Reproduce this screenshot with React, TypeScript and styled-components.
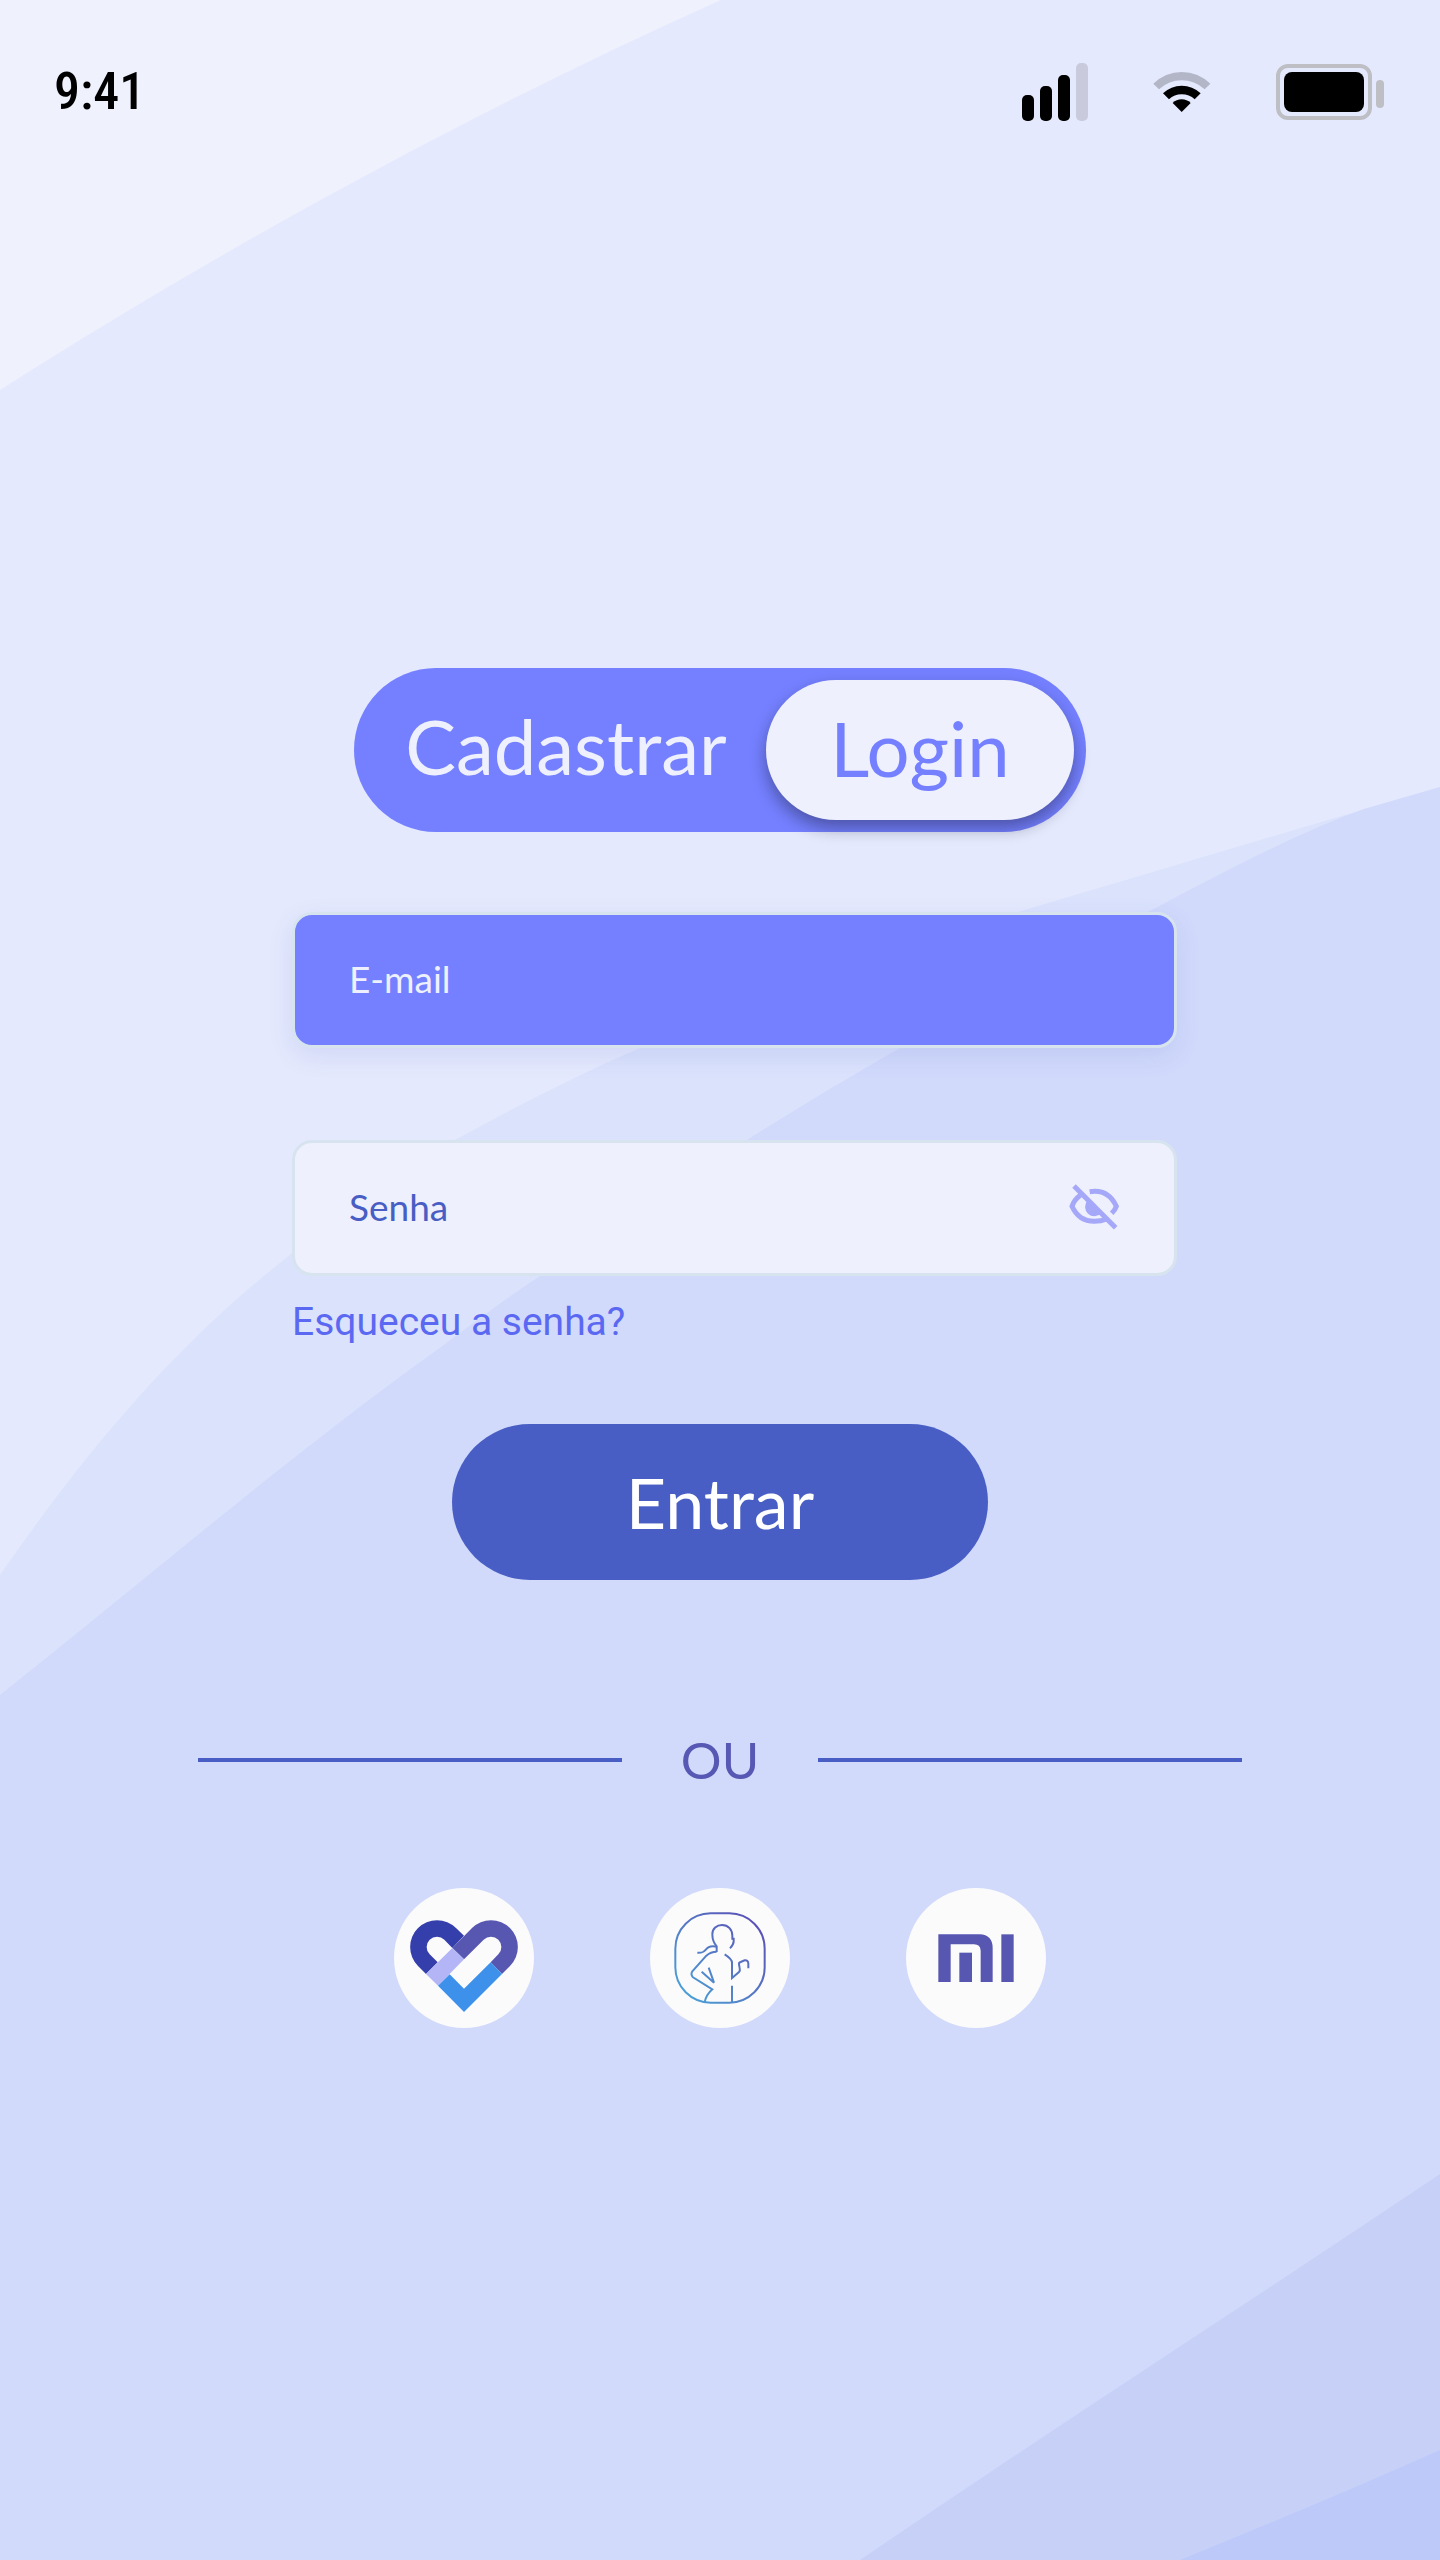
import React from "react";
import styled, { createGlobalStyle } from "styled-components";

const colors = {
  base: "#e4e9fd",
  pale: "#eef0fd",
  primary: "#7480ff",
  strong: "#485ec4",
  violet: "#5757b4",
  link: "#5b68f2",
};

const humanist = `Lato, "Open Sans", sans-serif`;

const GlobalStyle = createGlobalStyle`
  *, *::before, *::after { box-sizing: border-box; }
  body { margin: 0; background: ${colors.base}; }
  button, input { font-family: inherit; }
`;

const Screen = styled.div`
  position: relative;
  isolation: isolate;
  min-height: 100vh;
  padding-bottom: 96px;
  font-family: ${humanist};
  overflow: hidden;
`;

const Backdrop = styled.svg`
  position: absolute;
  inset: 0;
  z-index: -1;
  width: 100%;
  height: 100%;
`;

const StatusBar = styled.header`
  display: flex;
  align-items: center;
  justify-content: space-between;
  height: 184px;
  padding: 0 56px 0 54px;
`;

const Clock = styled.time`
  font-family: "Roboto Condensed", Roboto, sans-serif;
  font-size: 52px;
  font-weight: 500;
  line-height: 64px;
  color: #000;
`;

const StatusIcons = styled.div`
  display: flex;
  align-items: center;
  gap: 64px;
`;

const Content = styled.main`
  display: flex;
  flex-direction: column;
  align-items: center;
  padding: 484px 24px 0;
`;

const Toggle = styled.div`
  display: grid;
  grid-template-columns: 1fr 308px;
  width: 732px;
  max-width: 100%;
  height: 164px;
  padding: 12px;
  border-radius: 82px;
  background: ${colors.primary};
`;

const ToggleOption = styled.button<{ $active?: boolean }>`
  padding: 0 0 ${(p) => (p.$active ? "4px" : "8px")};
  border: 0;
  border-radius: 70px;
  background: ${(p) => (p.$active ? colors.pale : "transparent")};
  color: ${(p) => (p.$active ? colors.primary : colors.pale)};
  box-shadow: ${(p) => (p.$active ? "0 8px 16px rgba(20, 20, 40, 0.4)" : "none")};
  font-size: 76px;
  line-height: 92px;
`;

const Form = styled.form`
  display: flex;
  flex-direction: column;
  align-items: center;
  width: 100%;
  margin-top: 80px;
`;

const Fields = styled.div`
  display: flex;
  flex-direction: column;
  width: 914px;
  max-width: 100%;
  padding-left: 29px;
`;

const Field = styled.label<{ $filled?: boolean }>`
  display: flex;
  align-items: center;
  height: 136px;
  padding: 0 54px 2px;
  border: 3px solid #d7e4ef;
  border-radius: 20px;
  background: ${(p) => (p.$filled ? colors.primary : colors.pale)};
  color: ${(p) => (p.$filled ? colors.pale : colors.strong)};
  box-shadow: ${(p) => (p.$filled ? "0 8px 24px rgba(72, 94, 196, 0.12)" : "none")};

  & + & {
    margin-top: 92px;
  }
`;

const Input = styled.input`
  flex: 1;
  min-width: 0;
  padding: 0;
  border: 0;
  outline: 0;
  background: transparent;
  color: inherit;
  font-size: 37px;
  line-height: 48px;

  &::placeholder {
    color: inherit;
    opacity: 1;
  }
`;

const IconButton = styled.button`
  display: flex;
  padding: 0;
  border: 0;
  background: transparent;
`;

const ForgotLink = styled.a`
  align-self: flex-start;
  margin-top: 22px;
  font-family: Roboto, sans-serif;
  font-size: 39px;
  line-height: 48px;
  color: ${colors.link};
  text-decoration: none;
`;

const Submit = styled.button`
  width: 536px;
  max-width: 100%;
  height: 156px;
  margin-top: 78px;
  padding: 0;
  border: 0;
  border-radius: 78px;
  background: ${colors.strong};
  color: #fff;
  font-size: 70px;
  line-height: 84px;
`;

const Divider = styled.div`
  display: grid;
  grid-template-columns: 1fr 196px 1fr;
  align-items: center;
  width: 1044px;
  max-width: 100%;
  margin-top: 148px;
  color: ${colors.violet};
  font-size: 51px;
  line-height: 64px;
  text-align: center;

  &::before,
  &::after {
    content: "";
    height: 4px;
    background: ${colors.strong};
  }
`;

const Providers = styled.div`
  display: flex;
  gap: 116px;
  margin-top: 96px;
`;

const Provider = styled.button`
  display: flex;
  width: 140px;
  height: 140px;
  padding: 0;
  border: 0;
  border-radius: 50%;
  background: #fbfbfc;
`;

const Waves = () => (
  <Backdrop viewBox="0 0 1440 2560" preserveAspectRatio="none" aria-hidden="true">
    <path fill="#eff1fd" d="M0 0H721C470 112 220 250 0 390Z" />
    <path
      fill="#dae2fc"
      d="M0 1575C90 1445 180 1342 280 1263C335 1218 395 1174 455 1140C515 1107 577 1075 640 1048C760 996 890 950 1018 912C1160 870 1300 828 1440 787V2560H0Z"
    />
    <path
      fill="#d1dafb"
      d="M0 1695C145 1580 290 1455 437 1350C470 1325 505 1299 540 1276C608 1230 677 1183 747 1140C798 1108 849 1077 900 1048C980 1000 1065 952 1148 912C1225 871 1295 834 1364 809L1440 787V2560H0Z"
    />
    <path fill="#c7d1f8" d="M1440 2174C1250 2302 1050 2430 860 2560H1440Z" />
    <path fill="#bdc9f8" d="M1440 2450C1355 2488 1268 2524 1180 2560H1440Z" />
  </Backdrop>
);

const SignalIcon = () => (
  <svg width="66" height="58" viewBox="0 0 66 58" aria-hidden="true">
    <rect x="0" y="32" width="12" height="26" rx="5" />
    <rect x="18" y="23" width="12" height="35" rx="5" />
    <rect x="36" y="12" width="12" height="46" rx="5" />
    <rect x="54" y="0" width="12" height="58" rx="5" fill="#c9cbdd" />
  </svg>
);

const WifiIcon = () => (
  <svg width="60" height="40" viewBox="464 96 180 120" aria-hidden="true">
    <path fill="#b3b6c7" d="M468 131Q505 96 553 96Q602 96 639 131L622 148Q592 121 553 121Q515 121 485 148Z" />
    <path d="M497 160Q521 137 553 137Q586 137 610 160L592 178Q576 163 553 163Q531 163 515 178Z" />
    <path d="M526 189Q537 178 553 178Q569 178 580 189L553 216Z" />
  </svg>
);

const BatteryIcon = () => (
  <svg width="108" height="56" viewBox="0 0 108 56" aria-hidden="true">
    <rect x="2" y="2" width="92" height="52" rx="10" fill="none" stroke="#bebfc4" strokeWidth="4" />
    <rect x="8" y="8" width="80" height="40" rx="8" />
    <rect x="100" y="16" width="8" height="28" rx="4" fill="#bebfc4" />
  </svg>
);

const EyeOffIcon = () => (
  <svg width="52" height="48" viewBox="984 878 156 144" fill="none" stroke="#a5a8f8" strokeWidth="15" aria-hidden="true">
    <path d="M1002 887L1127 1012" />
    <path d="M1021 915Q1003 928 996 948Q1016 993 1063 993Q1084 993 1100 986" />
    <path d="M1049 904Q1105 895 1129 948Q1125 959 1115 969" />
    <path d="M1043 930A24 24 0 1 0 1084 969Z" fill="#a5a8f8" stroke="none" />
  </svg>
);

const HeartLogo = () => (
  <svg width="140" height="140" viewBox="36 54 420 420" aria-hidden="true">
    <path fill="#353fac" d="M132 312L108 288A80 80 0 0 1 222 174L246 197L211 234L187 209A31 31 0 0 0 143 253L167 277Z" />
    <path fill="#5757b2" d="M211 234L270 174A80 80 0 0 1 384 288L360 312L326 277L349 253A31 31 0 0 0 305 209L246 268Z" />
    <path fill="#b3b5f6" d="M211 234L246 268L168 347L132 312Z" />
    <path fill="#3d91ea" d="M168 347L203 313L246 356L326 277L360 312L246 426Z" />
  </svg>
);

const RunnerLogo = () => (
  <svg width="140" height="140" viewBox="39 54 420 420" fill="none" stroke="url(#runner)" strokeWidth="6" aria-hidden="true">
    <defs>
      <linearGradient id="runner" gradientUnits="userSpaceOnUse" x1="130" y1="380" x2="370" y2="150">
        <stop offset="0" stopColor="#4aa3d8" />
        <stop offset="0.5" stopColor="#5578c4" />
        <stop offset="1" stopColor="#5b4db5" />
      </linearGradient>
    </defs>
    <rect x="115" y="130" width="268" height="268" rx="106" />
    <path d="M239 246V229C229 218 226 205 226 193C226 176 239 165 255 165C274 165 286 179 286 197V206H290V214C290 223 285 229 279 235" />
    <path d="M181 248C205 250 203 239 214 232Q224 227 239 230" />
    <path d="M239 245Q221 245 208 257L166 304Q160 314 168 322L226 358Q208 374 203 396" />
    <path d="M194 305L231 338L215 293" />
    <path d="M263 253Q285 267 285 278V324L306 306Q310 302 308 294L306 283Q305 278 311 276L323 271Q334 270 334 281V295" />
    <path d="M285 347V397" />
  </svg>
);

const MiLogo = () => (
  <svg width="140" height="140" viewBox="42 54 420 420" fill="#5757b2" aria-hidden="true">
    <path d="M139 193H263Q302 195 302 234V336H266V242Q265 223 246 223H176V336H139Z" />
    <rect x="202" y="248" width="38" height="88" />
    <rect x="328" y="193" width="37" height="143" />
  </svg>
);

export default function App() {
  return (
    <Screen>
      <GlobalStyle />
      <Waves />
      <StatusBar>
        <Clock>9:41</Clock>
        <StatusIcons>
          <SignalIcon />
          <WifiIcon />
          <BatteryIcon />
        </StatusIcons>
      </StatusBar>
      <Content>
        <Toggle>
          <ToggleOption type="button">Cadastrar</ToggleOption>
          <ToggleOption type="button" $active aria-pressed="true">
            Login
          </ToggleOption>
        </Toggle>
        <Form onSubmit={(e) => e.preventDefault()}>
          <Fields>
            <Field $filled htmlFor="email">
              <Input id="email" type="email" placeholder="E-mail" aria-label="E-mail" />
            </Field>
            <Field htmlFor="password">
              <Input id="password" type="password" placeholder="Senha" aria-label="Senha" />
              <IconButton type="button" aria-label="Mostrar senha">
                <EyeOffIcon />
              </IconButton>
            </Field>
            <ForgotLink href="#senha">Esqueceu a senha?</ForgotLink>
          </Fields>
          <Submit type="submit">Entrar</Submit>
        </Form>
        <Divider>OU</Divider>
        <Providers>
          <Provider type="button" aria-label="Samsung Health">
            <HeartLogo />
          </Provider>
          <Provider type="button" aria-label="Running">
            <RunnerLogo />
          </Provider>
          <Provider type="button" aria-label="Xiaomi">
            <MiLogo />
          </Provider>
        </Providers>
      </Content>
    </Screen>
  );
}
